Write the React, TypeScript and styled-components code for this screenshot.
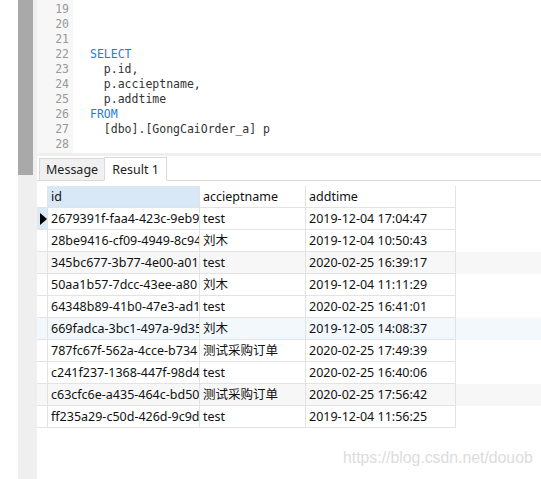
import styled, { createGlobalStyle } from "styled-components";

const GlobalStyle = createGlobalStyle`
    html, body {
        margin: 0;
        padding: 0;
        background: #ffffff;
    }
`;

const Page = styled.div`
    position: relative;
    display: flex;
    width: 541px;
    height: 479px;
    overflow: hidden;
    padding-left: 18px;
    box-sizing: border-box;
    font-family: "Noto Sans", "Noto Sans CJK SC", sans-serif;
`;

const Rail = styled.div`
    width: 19px;
    flex-shrink: 0;
    background: #efefef;
`;

const Thumb = styled.div`
    width: 15px;
    height: 175px;
    background: #a9a9a9;
`;

const Main = styled.div`
    flex: 1;
    display: flex;
    flex-direction: column;
    min-width: 0;
`;

const Editor = styled.div`
    display: flex;
    height: 153px;
    flex-shrink: 0;
`;

const Gutter = styled.div`
    width: 32px;
    padding: 2px 4px 0 0;
    background: #f7f7f7;
    text-align: right;
    font-family: "DejaVu Sans Mono", monospace;
    font-size: 11.5px;
    line-height: 15px;
    color: #999999;
`;

const Code = styled.div`
    flex: 1;
    padding: 2px 0 0 17px;
    font-family: "DejaVu Sans Mono", monospace;
    font-size: 11.5px;
    line-height: 15px;
    color: #333333;
    white-space: pre;
`;

const Keyword = styled.span`
    color: #1f7ae6;
`;

const Separator = styled.div`
    height: 3px;
    background: #efefef;
    flex-shrink: 0;
`;

const TabBar = styled.div`
    display: flex;
    align-items: flex-end;
    height: 24px;
    padding-left: 2px;
    border-bottom: 1px solid #dadada;
    flex-shrink: 0;
`;

const Tab = styled.div<{ $active?: boolean }>`
    height: ${({ $active }) => ($active ? "24px" : "23px")};
    box-sizing: border-box;
    padding: 0 ${({ $active }) => ($active ? "7px" : "6px")};
    margin-bottom: -1px;
    display: flex;
    align-items: center;
    font-size: 12.5px;
    color: #222222;
    background: ${({ $active }) => ($active ? "#ffffff" : "#f0f0f0")};
    border: 1px solid #d9d9d9;
    border-bottom: ${({ $active }) => ($active ? "1px solid #ffffff" : "1px solid #dadada")};
    ${({ $active }) => ($active ? "" : "border-right: none;")}
`;

const GridArea = styled.div`
    flex: 1;
    padding-top: 5px;
`;

const Row = styled.div<{ $bg?: string }>`
    display: grid;
    grid-template-columns: 11px 152px 106px 150px;
    height: 22px;
    background: ${({ $bg }) => $bg || "#ffffff"};
`;

const Cell = styled.div<{ $bg?: string }>`
    box-sizing: border-box;
    padding-left: 3px;
    border-right: 1px solid #e3e3e3;
    border-bottom: 1px solid #e3e3e3;
    background: ${({ $bg }) => $bg || "transparent"};
    font-size: 12.5px;
    line-height: 21px;
    color: #111111;
    white-space: nowrap;
    overflow: hidden;
    text-overflow: clip;
`;

const Indicator = styled.div<{ $bg?: string }>`
    box-sizing: border-box;
    display: flex;
    align-items: center;
    justify-content: center;
    border-right: 1px solid #e3e3e3;
    border-bottom: 1px solid #e3e3e3;
    background: ${({ $bg }) => $bg || "#ffffff"};
`;

const Arrow = styled.div`
    width: 0;
    height: 0;
    margin-left: 2px;
    border-top: 6px solid transparent;
    border-bottom: 6px solid transparent;
    border-left: 7px solid #000000;
`;

const Watermark = styled.div`
    position: absolute;
    left: 343px;
    top: 449px;
    font-family: "Liberation Sans", Arial, sans-serif;
    font-size: 15.8px;
    color: #dcdcdc;
    white-space: nowrap;
`;

const rows = [
    { id: "2679391f-faa4-423c-9eb9", name: "test", time: "2019-12-04 17:04:47" },
    { id: "28be9416-cf09-4949-8c94", name: "刘木", time: "2019-12-04 10:50:43" },
    { id: "345bc677-3b77-4e00-a01", name: "test", time: "2020-02-25 16:39:17", bg: "#f7f7f7" },
    { id: "50aa1b57-7dcc-43ee-a80", name: "刘木", time: "2019-12-04 11:11:29" },
    { id: "64348b89-41b0-47e3-ad1", name: "test", time: "2020-02-25 16:41:01" },
    { id: "669fadca-3bc1-497a-9d35", name: "刘木", time: "2019-12-05 14:08:37", bg: "#f3f8fd" },
    { id: "787fc67f-562a-4cce-b734", name: "测试采购订单", time: "2020-02-25 17:49:39" },
    { id: "c241f237-1368-447f-98d4", name: "test", time: "2020-02-25 16:40:06" },
    { id: "c63cfc6e-a435-464c-bd50", name: "测试采购订单", time: "2020-02-25 17:56:42", bg: "#f7f7f7" },
    { id: "ff235a29-c50d-426d-9c9d", name: "test", time: "2019-12-04 11:56:25" },
];

const lineNumbers = [19, 20, 21, 22, 23, 24, 25, 26, 27, 28];

const App: React.FC = () => {
    return (
        <>
            <GlobalStyle />
            <Page>
                <Rail>
                    <Thumb />
                </Rail>
                <Main>
                    <Editor>
                        <Gutter>
                            {lineNumbers.map((n) => (
                                <div key={n}>{n}</div>
                            ))}
                        </Gutter>
                        <Code>
                            <div> </div>
                            <div> </div>
                            <div> </div>
                            <div><Keyword>SELECT</Keyword></div>
                            <div>{"  p.id,"}</div>
                            <div>{"  p.accieptname,"}</div>
                            <div>{"  p.addtime"}</div>
                            <div><Keyword>FROM</Keyword></div>
                            <div>{"  [dbo].[GongCaiOrder_a] p"}</div>
                            <div> </div>
                        </Code>
                    </Editor>
                    <Separator />
                    <TabBar>
                        <Tab>Message</Tab>
                        <Tab $active>Result 1</Tab>
                    </TabBar>
                    <GridArea>
                        <Row>
                            <Indicator />
                            <Cell $bg="#d9e8f6">id</Cell>
                            <Cell>accieptname</Cell>
                            <Cell>addtime</Cell>
                        </Row>
                        {rows.map((r, i) => (
                            <Row key={r.id} $bg={r.bg}>
                                <Indicator $bg={i === 0 ? "#dce9f6" : r.bg}>
                                    {i === 0 && <Arrow />}
                                </Indicator>
                                <Cell>{r.id}</Cell>
                                <Cell>{r.name}</Cell>
                                <Cell>{r.time}</Cell>
                            </Row>
                        ))}
                    </GridArea>
                </Main>
                <Watermark>https://blog.csdn.net/douob</Watermark>
            </Page>
        </>
    );
};

export default App;
